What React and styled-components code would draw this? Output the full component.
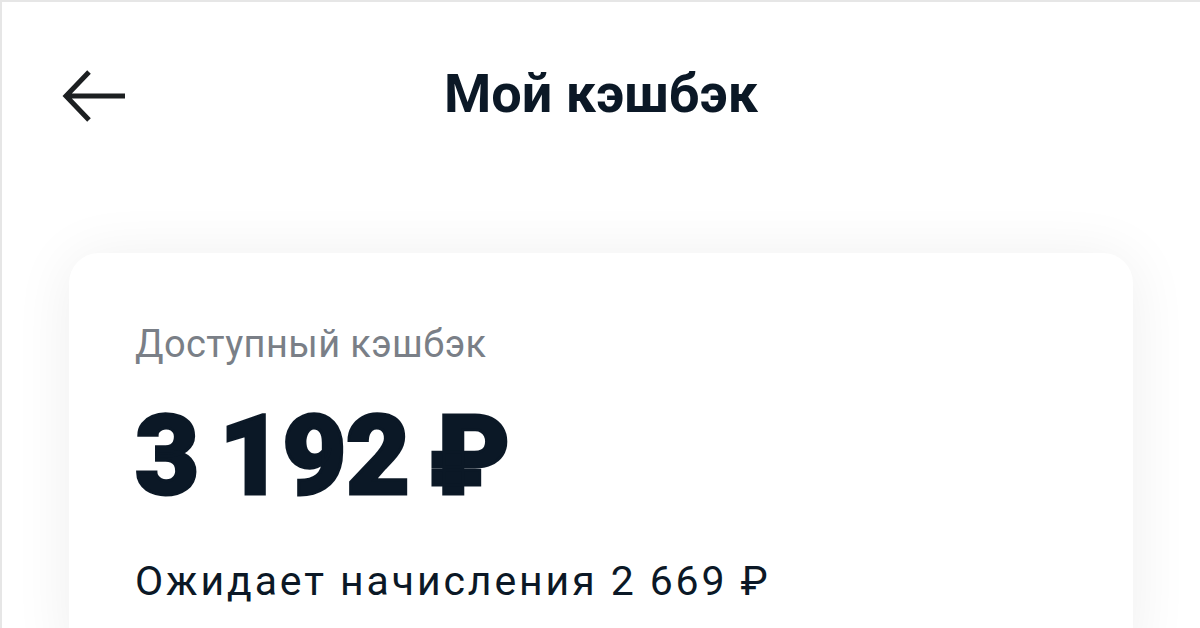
import React from "react";
import styled, { createGlobalStyle } from "styled-components";

const GlobalStyle = createGlobalStyle`
    html, body {
        margin: 0;
        padding: 0;
        background: #ffffff;
    }

    body {
        font-family: Roboto, "Noto Sans", sans-serif;
        color: #0b1826;
    }
`;

const Screen = styled.main`
    box-sizing: border-box;
    width: 100%;
    height: 628px;
    overflow: hidden;
    border-top: 2px solid #e6e6e6;
    border-left: 2px solid #e6e6e6;
`;

const Header = styled.header`
    position: relative;
    height: 186px;
    display: flex;
    align-items: center;
    justify-content: center;
`;

const BackButton = styled.button`
    position: absolute;
    left: 60px;
    top: 66px;
    width: 66px;
    height: 56px;
    padding: 0;
    border: none;
    background: none;
    display: flex;
    align-items: center;
    cursor: pointer;
`;

const Title = styled.h1`
    margin: -4px 0 0;
    font-size: 54px;
    font-weight: 700;
    color: #0b1826;
`;

const Card = styled.section`
    margin: 65px 67px 0;
    background: #ffffff;
    border-radius: 30px;
    box-shadow: 0 4px 60px rgba(0, 0, 0, 0.07);
    padding: 70px 66px 60px;
    display: flex;
    flex-direction: column;
`;

const Label = styled.p`
    margin: 0;
    font-size: 38px;
    line-height: 42px;
    letter-spacing: 0.4px;
    color: #7a7f87;
`;

const Amount = styled.div`
    margin-top: 36px;
    font-size: 111px;
    line-height: 110px;
    font-weight: 900;
    color: #0b1826;
    letter-spacing: -1px;
    word-spacing: -6px;
    -webkit-text-stroke: 3px #0b1826;
`;

const Pending = styled.p`
    margin: 48px 0 0;
    font-size: 41px;
    line-height: 44px;
    letter-spacing: 2.9px;
    color: #0b1826;
`;

const ArrowLeft = () => (
    <svg width="64" height="52" viewBox="0 0 64 52" fill="none">
        <path
            d="M63 26H5M27 2L4 26L27 50"
            stroke="#1c1f21"
            strokeWidth="5"
        />
    </svg>
);

export default function App(){

    return(
        <Screen>
            <GlobalStyle />

            <Header>
                <BackButton aria-label="Назад">
                    <ArrowLeft />
                </BackButton>
                <Title>Мой кэшбэк</Title>
            </Header>

            <Card>
                <Label>Доступный кэшбэк</Label>
                <Amount>3 192 ₽</Amount>
                <Pending>Ожидает начисления 2 669 ₽</Pending>
            </Card>
        </Screen>
    );
};
